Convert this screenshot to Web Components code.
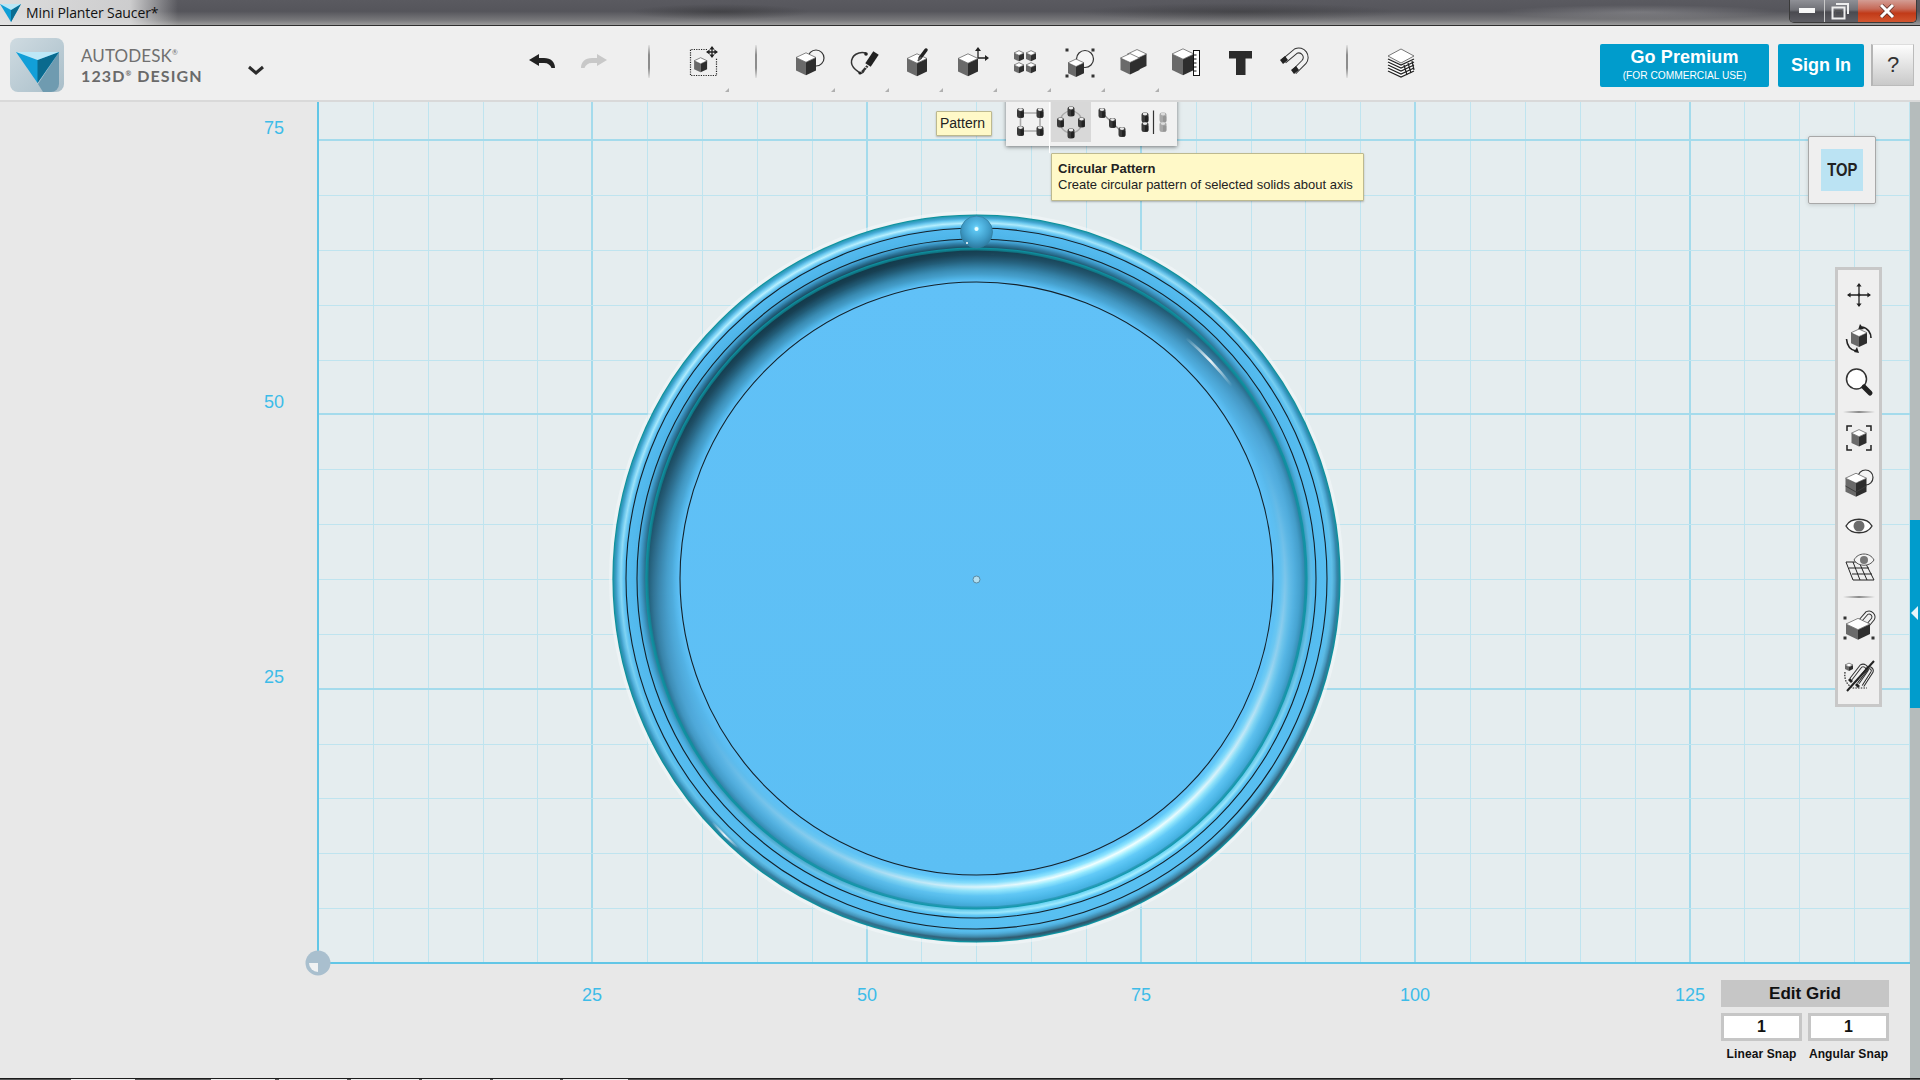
<!DOCTYPE html>
<html>
<head>
<meta charset="utf-8">
<title>Mini Planter Saucer*</title>
<style>
  html, body { margin: 0; padding: 0; height: 100%; overflow: hidden; background: #e8e8e8; }
  body { width: 1920px; height: 1080px; display: flex; flex-direction: column; font-family: "Liberation Sans", Arial, sans-serif; }
</style>
</head>
<body>
<win-titlebar>Mini Planter Saucer*</win-titlebar>

<app-toolbar>
  <tool-button icon="undo" w="52" slot="edit"></tool-button>
  <tool-button icon="redo" w="52" slot="edit"></tool-button>
  <tool-sep slot="edit" style="margin:19px 26px 0 28px"></tool-sep>
  <tool-button icon="primitives" corner slot="edit"></tool-button>
  <tool-sep slot="edit" style="margin:19px 25px 0"></tool-sep>
  <tool-button icon="sketch" corner slot="edit"></tool-button>
  <tool-button icon="pen" dx="2" corner slot="edit"></tool-button>
  <tool-button icon="brush" dx="2" corner slot="edit"></tool-button>
  <tool-button icon="move" dx="1" corner slot="edit"></tool-button>
  <tool-button icon="pattern" corner slot="edit"></tool-button>
  <tool-button icon="scale" corner slot="edit"></tool-button>
  <tool-button icon="combine" corner slot="edit"></tool-button>
  <tool-button icon="ruler" slot="edit"></tool-button>
  <tool-button icon="text" slot="edit"></tool-button>
  <tool-button icon="magnet" dx="-1" slot="edit"></tool-button>
  <tool-sep slot="edit" style="margin:19px 26px 0 24px"></tool-sep>
  <tool-button icon="layers" slot="edit"></tool-button>
</app-toolbar>

<work-space>
  <grid-plane></grid-plane>
  <planter-model></planter-model>

  <ruler-label x="274" y="128">75</ruler-label>
  <ruler-label x="274" y="402">50</ruler-label>
  <ruler-label x="274" y="677">25</ruler-label>
  <ruler-label x="592" y="995">25</ruler-label>
  <ruler-label x="867" y="995">50</ruler-label>
  <ruler-label x="1141" y="995">75</ruler-label>
  <ruler-label x="1415" y="995">100</ruler-label>
  <ruler-label x="1690" y="995">125</ruler-label>
  <origin-mark></origin-mark>

  <hint-tip style="left:936px;top:9px;width:56px;height:25px;padding:0 0 0 3px">Pattern</hint-tip>
  <pattern-flyout></pattern-flyout>
  <hint-tip style="left:1051px;top:51px;width:313px;height:48px;padding:7px 0 0 6px;line-height:16px;font-size:13px">
    <b>Circular Pattern</b><br>Create circular pattern of selected solids about axis
  </hint-tip>

  <view-cube>TOP</view-cube>
  <nav-panel>
    <nav-cell icon="n-move" style="margin-top:7px"></nav-cell>
    <nav-cell icon="n-orbit" style="margin-top:7px"></nav-cell>
    <nav-cell icon="n-zoom" style="margin-top:7px"></nav-cell>
    <nav-rule style="margin-top:12px"></nav-rule>
    <nav-cell icon="n-fit" style="margin-top:7px"></nav-cell>
    <nav-cell icon="n-view" style="margin-top:8px"></nav-cell>
    <nav-cell icon="n-eye" style="margin-top:8px"></nav-cell>
    <nav-cell icon="n-grid" style="margin-top:5px"></nav-cell>
    <nav-rule style="margin-top:11px"></nav-rule>
    <nav-cell icon="n-snap" style="margin-top:9px"></nav-cell>
    <nav-cell icon="n-mix" style="margin-top:15px"></nav-cell>
  </nav-panel>
  <side-rail></side-rail>
  <snap-panel></snap-panel>
</work-space>
<task-edge></task-edge>

<script>
// helpers for the little isometric toolbar pictures
function cube(cx, cy, hw, h) {
  const rh = hw * 0.47;
  h = h === undefined ? hw * 1.3 : h;
  const y0 = cy - (2 * rh + h) / 2;
  const p = (...a) => a.join(' ');
  return `<path d="M${p(cx - hw, y0 + rh)}L${p(cx, y0 + 2 * rh)}V${y0 + 2 * rh + h}L${p(cx - hw, y0 + rh + h)}Z" fill="#6a6a6a"/>` +
    `<path d="M${p(cx + hw, y0 + rh)}L${p(cx, y0 + 2 * rh)}V${y0 + 2 * rh + h}L${p(cx + hw, y0 + rh + h)}Z" fill="#2e2e2e"/>` +
    `<path d="M${p(cx, y0)}L${p(cx + hw, y0 + rh)}L${p(cx, y0 + 2 * rh)}L${p(cx - hw, y0 + rh)}Z" fill="#fff" stroke="#555" stroke-width=".7"/>`;
}
function ring(cx, cy, r) {
  return `<circle cx="${cx}" cy="${cy}" r="${r}" fill="#f4f4f4" stroke="#333" stroke-width="1.2"/>`;
}
function cyl(cx, cy, dim) {
  const c = dim ? '#a8a8a8' : '#3a3a3a';
  const t = dim ? '#dcdcdc' : '#e8e8e8';
  return `<rect x="${cx - 3.5}" y="${cy - 5}" width="7" height="10" rx="2.5" fill="${c}"/>` +
    `<ellipse cx="${cx}" cy="${cy - 3.4}" rx="2.3" ry="1.4" fill="${t}"/>` +
    `<rect x="${cx}" y="${cy - 1.6}" width="3.3" height="6" rx="1" fill="${dim ? '#969696' : '#222'}"/>`;
}
function dots(list) {
  return list.map(([x, y]) => `<rect x="${x - 1.5}" y="${y - 1.5}" width="3" height="3" fill="#333"/>`).join('');
}
function cross(cx, cy, r) {
  const h = 2.6;
  return `<path d="M${cx - r} ${cy}H${cx + r}M${cx} ${cy - r}V${cy + r}" stroke="#222" stroke-width="1.3" fill="none"/>` +
    `<path d="M${cx} ${cy - r - 1}l${h} ${h + 1}h${-2 * h}ZM${cx} ${cy + r + 1}l${h} ${-h - 1}h${-2 * h}ZM${cx - r - 1} ${cy}l${h + 1} ${h}v${-2 * h}ZM${cx + r + 1} ${cy}l${-h - 1} ${h}v${-2 * h}Z" fill="#222"/>`;
}
function magnet(d, sw) {
  return `<path d="${d}" fill="none" stroke="#333" stroke-width="${sw}"/><path d="${d}" fill="none" stroke="#f2f2f2" stroke-width="${sw - 2}"/>`;
}

const ICONS = {
  undo: `<svg width="36" height="36" viewBox="0 0 36 36"><path d="M5 16L15 10V14H20C27 14 31 18 31 24H27.5C26.5 21 24 19 20 19H15V22Z" fill="#222"/></svg>`,
  redo: `<svg width="36" height="36" viewBox="0 0 36 36"><path d="M31 16L21 10V14H16C9 14 5 18 5 24H8.5C9.5 21 12 19 16 19H21V22Z" fill="#c8c8c8"/></svg>`,
  primitives: `<svg width="36" height="36" viewBox="0 0 36 36"><path d="M22 5.5H5.5V31.5H31.5V14" fill="none" stroke="#222" stroke-width="1.2" stroke-dasharray="1.2 1.2"/>${cube(15.6, 21, 6.5)}${cross(27, 8, 5)}</svg>`,
  sketch: `<svg width="36" height="36" viewBox="0 0 36 36">${ring(25, 14, 8)}${cube(15, 20, 10)}</svg>`,
  pen: `<svg width="36" height="36" viewBox="0 0 36 36"><path d="M19 9C12 7 4 11 4.500 19C5 24 9 26 13 29C15 30 16 29 17 27" fill="none" stroke="#333" stroke-width="1.500"/><circle cx="19" cy="10" r="1.800" fill="#222"/><circle cx="13" cy="29" r="1.600" fill="#222"/><path d="M21 21L29 9" stroke="#222" stroke-width="6.500"/><path d="M20.500 22L15 28" stroke="#333" stroke-width="2.500"/><path d="M18 23l3 2" stroke="#eee" stroke-width="1"/></svg>`,
  brush: `<svg width="36" height="36" viewBox="0 0 36 36">${cube(16, 21, 10)}<path d="M19 14L25 6" stroke="#222" stroke-width="3.500" stroke-linecap="round"/><path d="M17 17L20 13" stroke="#555" stroke-width="2"/></svg>`,
  move: `<svg width="36" height="36" viewBox="0 0 36 36">${cube(14, 21, 10)}<path d="M24 14V5M24 14H33" stroke="#222" stroke-width="1.300"/><path d="M24 3l3 4h-6ZM35 14l-4 3v-6Z" fill="#222"/></svg>`,
  pattern: `<svg width="36" height="36" viewBox="0 0 36 36">${cube(12, 12, 5, 6)}${cube(24, 12, 5, 6)}${cube(12, 24, 5, 6)}${cube(24, 24, 5, 6)}</svg>`,
  scale: `<svg width="36" height="36" viewBox="0 0 36 36">${dots([[6, 6], [32, 6], [6, 32], [32, 32]])}${ring(24, 15, 8.500)}${cube(15, 24, 8)}</svg>`,
  combine: `<svg width="36" height="36" viewBox="0 0 36 36">${cube(22, 16, 9.500, 12)}${cube(15, 20, 9.500, 12)}</svg>`,
  ruler: `<svg width="36" height="36" viewBox="0 0 36 36">${cube(14, 18, 11, 16)}<rect x="24.500" y="6.500" width="6" height="25" fill="#fff" stroke="#111"/><path d="M24.500 11h3M24.500 15h3M24.500 19h3M24.500 23h3M24.500 27h3" stroke="#111"/></svg>`,
  text: `<svg width="36" height="36" viewBox="0 0 36 36"><rect x="6" y="7" width="23" height="7.500" fill="#2b2b2b"/><rect x="13" y="7" width="9.500" height="24" fill="#2b2b2b"/></svg>`,
  magnet: `<svg width="36" height="36" viewBox="0 0 36 36">${magnet('M8 17L20 7A7 7 0 0 1 28 18L18 28', 6)}<path d="M4 16l5-4 3 4-5 4ZM15 26l5-4 3 4-5 4Z" fill="#222"/></svg>`,
  layers: `<svg width="36" height="36" viewBox="0 0 36 36"><path d="M5 15V27L18 33L31 27V14L18 20Z" fill="#fff"/><path d="M5 15L18 21L31 15M5 18L18 24L31 18M5 21L18 27L31 21M5 24L18 30L31 24M5 27L18 33L31 27" fill="none" stroke="#222" stroke-width="1.300"/><path d="M21 21L24 31M25 19L28 29M29 17L31 26" stroke="#222" stroke-width="1.200"/><path d="M18 5L31 12L18 19L5 12Z" fill="#fff" stroke="#555" stroke-width=".8"/></svg>`,

  'n-move': `<svg width="36" height="36" viewBox="0 0 36 36">${cross(18, 18, 11)}<circle cx="18" cy="18" r="1.400" fill="#222"/></svg>`,
  'n-orbit': `<svg width="36" height="36" viewBox="0 0 36 36"><path d="M21 7C27 8 30 13 30 18" fill="none" stroke="#222" stroke-width="1.600"/><path d="M15 31C9 30 6 25 5.500 19" fill="none" stroke="#222" stroke-width="1.600"/><path d="M19 4l4 5-6 1ZM18 33l-5-1 3-5Z" fill="#222"/>${cube(18, 18, 8)}</svg>`,
  'n-zoom': `<svg width="36" height="36" viewBox="0 0 36 36"><circle cx="15.500" cy="16" r="10" fill="#fff" stroke="#333" stroke-width="1.500"/><path d="M23 24L29 30" stroke="#222" stroke-width="5" stroke-linecap="round"/></svg>`,
  'n-fit': `<svg width="36" height="36" viewBox="0 0 36 36"><path d="M6 11V6H11M25 6H30V11M6 25V30H11M25 30H30V25" fill="none" stroke="#222" stroke-width="1.500"/>${cube(18, 18, 7.500)}</svg>`,
  'n-view': `<svg width="36" height="36" viewBox="0 0 36 36">${ring(24.500, 13.500, 7.500)}${cube(15, 21, 10.500)}<path d="M4.500 22L15 28L25.500 22" fill="none" stroke="#3f3f3f" stroke-width="1"/></svg>`,
  'n-eye': `<svg width="36" height="36" viewBox="0 0 36 36"><path d="M5 18C10 9 26 9 31 18C26 27 10 27 5 18Z" fill="#fff" stroke="#333" stroke-width="1.400"/><circle cx="18" cy="18" r="5.500" fill="#6c6c6c"/></svg>`,
  'n-grid': `<svg width="36" height="36" viewBox="0 0 36 36"><path d="M5 13H24M8 19H28M11 25H31M12 31H33M5 13L12 31M12 13L19 31M18 13L26 31M24 13L33 31" stroke="#222" stroke-width="1" fill="none"/><path d="M13 11C17 3 29 3 33 11C29 18 17 18 13 11Z" fill="#f4f4f4" stroke="#555"/><circle cx="23" cy="11" r="4" fill="#777"/></svg>`,
  'n-snap': `<svg width="36" height="36" viewBox="0 0 36 36">${dots([[4, 11], [32, 31], [4, 31]])}${magnet('M19 14L26 6A4.500 4.500 0 0 1 32 12L27 18', 4)}${cube(17, 22, 12, 10)}</svg>`,
  'n-mix': `<svg width="36" height="36" viewBox="0 0 36 36">${cube(8, 9, 4, 4)}<path d="M4 14C3 22 6 27 12 30H26" fill="none" stroke="#222" stroke-width="1.200" stroke-dasharray="1.500 1.200"/>${magnet('M10 21L20 8A4 4 0 0 1 26 12L17 25', 3.500)}${magnet('M16 24L27 10A3 3 0 0 1 31 14L22 28', 3)}<path d="M6 33L33 3" stroke="#222" stroke-width="2"/><path d="M9 20l3 3-2 2-3-3ZM16 25l3 3-2 2-3-3Z" fill="#222"/></svg>`,

  'p-rect': `<svg width="40" height="40" viewBox="0 0 40 40"><path d="M10.500 11V29H30V11H10.500" fill="none" stroke="#aaa" stroke-width="1.600"/>${cyl(10.500, 11)}${cyl(30, 11)}${cyl(10.500, 29)}${cyl(30, 29)}</svg>`,
  'p-circ': `<svg width="40" height="40" viewBox="0 0 40 40"><circle cx="20" cy="20" r="11" fill="none" stroke="#aaa" stroke-width="1.200"/>${cyl(20, 9.500)}${cyl(9.500, 20.500)}${cyl(30.500, 20.500)}${cyl(20, 31.500)}</svg>`,
  'p-path': `<svg width="40" height="40" viewBox="0 0 40 40"><path d="M10 11L20.500 21L30 30" stroke="#999" stroke-width="1.500"/>${cyl(10, 11)}${cyl(20.500, 21)}${cyl(30, 30)}</svg>`,
  'p-mirr': `<svg width="40" height="40" viewBox="0 0 40 40"><path d="M20.500 8.500V32" stroke="#333" stroke-width="1.200"/>${cyl(12, 15.500)}${cyl(12, 25)}${cyl(30, 15.500, true)}${cyl(30, 25, true)}</svg>`
};

class BaseElement extends HTMLElement {
  render(html) {
    const shadow = this.shadowRoot || this.attachShadow({ mode: 'open' });
    const template = document.createElement('template');
    template.innerHTML = html;
    shadow.appendChild(template.content.cloneNode(true));
  }
}

class WinTitlebar extends BaseElement {
  connectedCallback() {
    this.render(`
    <style>
      :host { display: flex; flex: 0 0 25px; height: 25px; border-bottom: 1px solid #2e2e2e; box-sizing: content-box;
        background:
          linear-gradient(90deg, rgba(232,232,232,.92) 0, rgba(225,225,225,.85) 130px, rgba(225,225,225,0) 178px),
          radial-gradient(ellipse 90px 8px at 720px 12px, rgba(30,30,30,.35), rgba(30,30,30,0)),
          radial-gradient(ellipse 160px 9px at 1240px 12px, rgba(30,30,30,.3), rgba(30,30,30,0)),
          radial-gradient(ellipse 140px 7px at 1640px 12px, rgba(255,255,255,.2), rgba(255,255,255,0)),
          linear-gradient(180deg, #5a5a60 0, #55555b 45%, #77777a 80%, #9c9c9c 100%); }
      .logo { margin: 3px 0 0 0; width: 22px; height: 20px; }
      .name { font: 14px/26px "Open Sans", "Liberation Sans", sans-serif; color: #111; margin-left: 4px; letter-spacing: -.1px; }
      .btns { margin-left: auto; margin-right: 3px; display: flex; height: 22px; border: 1px solid #3a3a3a; border-top: 0; border-radius: 0 0 5px 5px; overflow: hidden; }
      .b { display: flex; align-items: center; justify-content: center; box-sizing: border-box;
        background: linear-gradient(180deg, #8f9096 0, #6f7076 45%, #4a4a50 55%, #5e5e64 100%); border-right: 1px solid #c9c9c9; }
      .min { width: 35px; } .max { width: 33px; border-right: 0; padding-right: 3px; }
      .close { width: 58px; border: 0; background: linear-gradient(180deg, #d39d94 0, #c66a58 40%, #c13a18 60%, #d2552f 100%); }
    </style>
    <svg class="logo" viewBox="0 0 22 20"><path d="M0 1H21L11 19Z" fill="#0e9ed6"/><path d="M11 7L21 1L11 19Z" fill="#0b6c90"/><path d="M0 1H21L11 7Z" fill="#b9e6f6"/></svg>
    <span class="name"><slot></slot></span>
    <div class="btns">
      <div class="b min"><svg width="16" height="6"><rect width="16" height="5" fill="#fff" opacity=".95"/></svg></div>
      <div class="b max"><svg width="18" height="17" viewBox="0 0 18 17"><path d="M5 1H17V11" fill="none" stroke="#eee" stroke-width="2"/><rect x="1.500" y="4.500" width="12" height="11" fill="none" stroke="#eee" stroke-width="2"/><rect x="4.500" y="7.500" width="6" height="5" fill="none" stroke="#555" stroke-width="1"/></svg></div>
      <div class="b close"><svg width="16" height="14" viewBox="0 0 16 14"><path d="M2 1L14 13M14 1L2 13" stroke="#5c3028" stroke-width="4.500"/><path d="M2 1L14 13M14 1L2 13" stroke="#fff" stroke-width="3"/></svg></div>
    </div>`);
  }
}

class AppToolbar extends BaseElement {
  connectedCallback() {
    this.render(`
    <style>
      :host { display: flex; flex: 0 0 76px; height: 76px; box-sizing: border-box; background: #efefef; border-bottom: 2px solid #d9d9d9; }
      .brand { display: flex; width: 516px; flex: none; align-items: flex-start; }
      .logo { width: 54px; height: 54px; margin: 12px 0 0 10px; }
      .words { margin: 21px 0 0 17px; color: #6c6c6c; font-family: Lato, "Liberation Sans", sans-serif; width: 164px; }
      .w1 { font-size: 17px; line-height: 18px; letter-spacing: .1px; color: #707070; }
      .w2 { font-size: 16px; line-height: 21px; font-weight: 700; letter-spacing: 1.1px; color: #6a6a6a; }
      sup { font-size: 7px; line-height: 0; }
      .chev { margin: 39px 0 0 2px; }
      .edit { display: flex; align-items: flex-start; }
      .cta { margin-left: auto; display: flex; align-items: flex-start; padding: 18px 6px 0 0; gap: 9px; }
      .btn { background: #009ccc; color: #fff; border-radius: 2px; height: 43px; display: flex; flex-direction: column; align-items: center; justify-content: center; font-weight: bold; font-size: 18px; }
      .prem { width: 169px; } .sign { width: 86px; }
      .prem span { font-weight: normal; font-size: 10.2px; line-height: 13px; margin-top: 2px; }
      .prem b { line-height: 19px; letter-spacing: .1px; margin-top: -1px; }
      .help { width: 43px; height: 42px; margin-left: -2px; box-sizing: border-box; border: 1px solid #bbb; border-left: 2px solid #b5b5b5; border-top-color: #ddd; background: linear-gradient(180deg, #fdfdfd, #c9c9c9); color: #333; font-size: 22px; line-height: 40px; text-align: center; }
    </style>
    <div class="brand">
      <svg class="logo" viewBox="0 0 54 54">
        <defs><linearGradient id="lg" x1="0" y1="0" x2="1" y2="1"><stop offset="0" stop-color="#cfdbe1"/><stop offset="1" stop-color="#a9bec9"/></linearGradient></defs>
        <rect width="54" height="54" rx="8" fill="url(#lg)"/>
        <path d="M49 14V46A8 8 0 0 1 41 54H33L28 46Z" fill="#6f9bb0"/>
        <path d="M6 14H49L27.500 45Z" fill="#129fd8"/>
        <path d="M27.500 22L49 14L27.500 45Z" fill="#0a6a8e"/>
        <path d="M6 14H49L27.500 22Z" fill="#bde8f7"/>
      </svg>
      <div class="words"><div class="w1">AUTODESK<sup>®</sup></div><div class="w2">123D<sup>®</sup> DESIGN</div></div>
      <svg class="chev" width="18" height="12" viewBox="0 0 18 12"><path d="M2 2L9 8L16 2" fill="none" stroke="#2b2b2b" stroke-width="3"/></svg>
    </div>
    <div class="edit"><slot name="edit"></slot></div>
    <div class="cta">
      <div class="btn prem"><b>Go Premium</b><span>(FOR COMMERCIAL USE)</span></div>
      <div class="btn sign">Sign In</div>
      <div class="help">?</div>
    </div>`);
  }
}

class ToolButton extends BaseElement {
  connectedCallback() {
    const w = this.getAttribute('w') || 54;
    const dx = this.getAttribute('dx') || 0;
    this.render(`
    <style>
      :host { display: flex; position: relative; width: ${w}px; height: 74px; box-sizing: border-box; padding-bottom: 2px; align-items: center; justify-content: center; flex: none; }
      svg { transform: translateX(${dx}px); }
      .corner { position: absolute; left: 49px; top: 62px; width: 0; height: 0; border-style: solid; border-width: 0 0 4px 4px; border-color: transparent transparent #b0b0b0 transparent; }
    </style>
    ${ICONS[this.getAttribute('icon')]}
    ${this.hasAttribute('corner') ? '<i class="corner"></i>' : ''}`);
  }
}

class ToolSep extends BaseElement {
  connectedCallback() {
    this.render(`<style>:host { display: block; flex: none; width: 2px; height: 33px; margin-top: 19px; background: linear-gradient(180deg, rgba(120,120,120,.1), #8c8c8c 30%, #8c8c8c 70%, rgba(120,120,120,.1)); }</style>`);
  }
}

class WorkSpace extends BaseElement {
  connectedCallback() {
    this.render(`<style>:host { display: block; position: relative; flex: 1 1 auto; background: #e8e8e8; overflow: hidden; }</style><slot></slot>`);
  }
}

class GridPlane extends BaseElement {
  connectedCallback() {
    const ox = 318, oy = 963, step = 54.86, right = 1910, top = 102;
    let lines = '';
    for (let i = 1; ox + i * step < right; i++) {
      const x = Math.round(ox + i * step), major = i % 5 === 0;
      lines += major
        ? `<rect x="${x - 1}" y="${top}" width="2" height="${oy - top}" fill="#a4dbec"/>`
        : `<rect x="${x}" y="${top}" width="1" height="${oy - top}" fill="#bfe4ef"/>`;
    }
    for (let i = 1; oy - i * step > top; i++) {
      const y = Math.round(oy - i * step), major = i % 5 === 0;
      lines += major
        ? `<rect x="${ox}" y="${y - 1}" width="${right - ox}" height="2" fill="#a4dbec"/>`
        : `<rect x="${ox}" y="${y}" width="${right - ox}" height="1" fill="#bfe4ef"/>`;
    }
    this.render(`
    <style>:host { position: absolute; left: 0; top: 0; display: block; width: 1920px; height: 976px; } svg { display: block; }</style>
    <svg width="1920" height="976" viewBox="0 102 1920 976">
      <rect x="${ox}" y="${top}" width="${right - ox}" height="${oy - top}" fill="#e5edef"/>
      ${lines}
      <rect x="${ox - 1}" y="${top}" width="2" height="${oy - top + 1}" fill="#62c6e6"/>
      <rect x="${ox - 1}" y="${oy - 1}" width="${right - ox + 1}" height="2" fill="#62c6e6"/>
    </svg>`);
  }
}

// shaded saucer: one thin ring per pixel of radius, coloured by a radial profile
// [radius, colour facing away from the light, side-on colour, colour facing the light]
const PROFILE = [
  [297, '#5fc0f6', '#5fc0f6', '#5fc0f6'],
  [300, '#4fb2e4', '#5bbdf2', '#62caf9'],
  [304, '#439cc8', '#56b6ea', '#8ee4ff'],
  [308, '#3a8cb4', '#54b2e4', '#f0ffff'],
  [312, '#2e7799', '#52ade0', '#9aecff'],
  [317, '#215a75', '#4ea8d8', '#62caf8'],
  [323, '#173f52', '#4298c4', '#4fbcec'],
  [327, '#13394a', '#327fa4', '#45b0e0'],
  [328, '#0f6f7d', '#148a9c', '#2e9cbc'],
  [330, '#0c8f9e', '#0e93a4', '#109aac'],
  [331, '#1b5068', '#3a93b8', '#70d6f6'],
  [334, '#2b7398', '#48aadc', '#a4eeff'],
  [337, '#3f9ccb', '#50b6ea', '#5ac6f6'],
  [340, '#4db4e8', '#53baee', '#58c0f2'],
  [351, '#55bbf0', '#56bdf0', '#58bff0'],
  [353, '#7fd4f6', '#5cc0ee', '#55b8e8'],
  [355, '#b8f0ff', '#66c6ee', '#4ba6d2'],
  [358, '#6ccaf0', '#4cacd8', '#3c7f9e'],
  [360, '#46a8d4', '#3a94bc', '#2f5468'],
  [362, '#2a9db8', '#1f8fa8', '#256f84'],
  [363, '#0d919c', '#0c8f9a', '#0a97a4']
];
function hex2(c) { return [1, 3, 5].map(i => parseInt(c.substr(i, 2), 16)); }
function mix(a, b, t) {
  const A = hex2(a), B = hex2(b);
  return '#' + A.map((v, i) => Math.round(v + (B[i] - v) * t).toString(16).padStart(2, '0')).join('');
}
function bandAt(r) {
  for (let i = 0; i < PROFILE.length - 1; i++) {
    const p = PROFILE[i], q = PROFILE[i + 1];
    if (r >= p[0] && r <= q[0]) {
      const t = (r - p[0]) / (q[0] - p[0] || 1);
      return [mix(p[1], q[1], t), mix(p[2], q[2], t), mix(p[3], q[3], t)];
    }
  }
  return PROFILE[PROFILE.length - 1].slice(1);
}

class PlanterModel extends BaseElement {
  connectedCallback() {
    const cx = 976.5, cy = 578.5, ux = 0.42, uy = 0.907;
    let defs = '', rings = '';
    for (let r = 363; r >= 297; r--) {
      const [d, m, l] = bandAt(r);
      const id = 'b' + r;
      defs += `<linearGradient id="${id}" gradientUnits="userSpaceOnUse" x1="${cx - ux * r}" y1="${cy - uy * r}" x2="${cx + ux * r}" y2="${cy + uy * r}">` +
        `<stop offset="0" stop-color="${d}"/><stop offset=".22" stop-color="${mix(d, m, .4)}"/><stop offset=".52" stop-color="${m}"/>` +
        `<stop offset=".82" stop-color="${mix(m, l, .4)}"/><stop offset="1" stop-color="${l}"/></linearGradient>`;
      rings += `<circle cx="${cx}" cy="${cy}" r="${r}" fill="none" stroke="url(#${id})" stroke-width="2.2"/>`;
    }
    this.render(`
    <style>:host { position: absolute; left: 0; top: 0; display: block; width: 1920px; height: 976px; } svg { display: block; }</style>
    <svg width="1920" height="976" viewBox="0 102 1920 976">
      <defs>
        ${defs}
        <linearGradient id="floor" x1="0" y1="0" x2="0" y2="1"><stop offset="0" stop-color="#61c1f7"/><stop offset="1" stop-color="#5cbff4"/></linearGradient>
        <radialGradient id="ball" cx=".5" cy=".38" r=".62">
          <stop offset="0" stop-color="#9fe8fb"/><stop offset=".16" stop-color="#5cc4f0"/><stop offset=".65" stop-color="#3f9cc8"/><stop offset="1" stop-color="#2c7aa0"/>
        </radialGradient>
        <linearGradient id="streak" x1="0" y1="0" x2="1" y2="1"><stop offset="0" stop-color="#fff" stop-opacity="0"/><stop offset=".5" stop-color="#fff" stop-opacity=".9"/><stop offset="1" stop-color="#fff" stop-opacity="0"/></linearGradient>
      </defs>
      <circle cx="${cx}" cy="${cy}" r="366" fill="none" stroke="#f4f8f9" stroke-opacity=".55" stroke-width="3"/>
      <circle cx="${cx}" cy="${cy}" r="297" fill="url(#floor)"/>
      ${rings}
      <path d="M1186 338A322 322 0 0 1 1232 386" fill="none" stroke="url(#streak)" stroke-width="2.500"/>
      <path d="M712 822A358 358 0 0 0 738 848" fill="none" stroke="url(#streak)" stroke-width="2"/>
      <g fill="none" stroke="#14222b" stroke-width="1.100">
        <circle cx="${cx}" cy="${cy}" r="296.500"/>
        <circle cx="${cx}" cy="${cy}" r="339.500"/>
        <circle cx="${cx}" cy="${cy}" r="350.500"/>
      </g>
      <circle cx="${cx}" cy="232" r="16" fill="url(#ball)" stroke="#347f9f" stroke-width=".8"/>
      <circle cx="${cx}" cy="229" r="2" fill="#eaffff"/>
      <circle cx="967" cy="243" r="1" fill="#fff"/>
      <circle cx="${cx}" cy="${cy + 1}" r="3.500" fill="#b4dff0" stroke="#5b8aa3" stroke-width="1"/>
    </svg>`);
  }
}

class RulerLabel extends BaseElement {
  connectedCallback() {
    const x = this.getAttribute('x'), y = this.getAttribute('y') - 102;
    this.render(`<style>:host { position: absolute; left: ${x}px; top: ${y}px; transform: translate(-50%, -50%); font-size: 18px; color: #3dbce8; line-height: 20px; }</style><slot></slot>`);
  }
}

class OriginMark extends BaseElement {
  connectedCallback() {
    this.render(`
    <style>:host { position: absolute; left: 305px; top: 848px; width: 26px; height: 26px; display: block; } svg { display: block; }</style>
    <svg width="26" height="26" viewBox="0 0 26 26"><circle cx="13" cy="13" r="12.500" fill="#a9bfce"/><path d="M13 13H4A9 9 0 0 0 13 22Z" fill="#f0f2f3"/></svg>`);
  }
}

class HintTip extends BaseElement {
  connectedCallback() {
    this.render(`<style>:host { position: absolute; display: block; box-sizing: border-box; background: #fff9c8; border: 1px solid #bdb98f; border-radius: 1px; box-shadow: 0 1px 2px rgba(0,0,0,.25); font-size: 14px; line-height: 23px; padding: 0 4px; color: #222; white-space: nowrap; z-index: 3; }</style><slot></slot>`);
  }
}

class PatternFlyout extends BaseElement {
  connectedCallback() {
    this.render(`
    <style>
      :host { position: absolute; left: 1006px; top: -4px; width: 171px; height: 48px; box-sizing: border-box; display: flex; gap: 1px; padding: 4px; background: #f1f1f1; box-shadow: 0 1px 4px rgba(0,0,0,.5); z-index: 2; }
      .c { width: 40px; height: 40px; flex: none; } .c.on { background: #d8d8d8; }
      .notch { position: absolute; left: 18px; top: -6px; width: 0; height: 0; border-left: 7px solid transparent; border-right: 7px solid transparent; border-bottom: 6px solid #f1f1f1; }
      .edge { position: absolute; left: 43px; top: -10px; width: 1px; height: 65px; background: #fff; }
    </style>
    <i class="notch"></i>
    <div class="c">${ICONS['p-rect']}</div><div class="c on">${ICONS['p-circ']}</div><div class="c">${ICONS['p-path']}</div><div class="c">${ICONS['p-mirr']}</div>
    <i class="edge"></i>`);
  }
}

class ViewCube extends BaseElement {
  connectedCallback() {
    this.render(`
    <style>
      :host { position: absolute; left: 1808px; top: 34px; width: 68px; height: 68px; box-sizing: border-box; display: flex; align-items: center; justify-content: center; background: #efefef; border: 1px solid #a8a8a8; border-radius: 2px; box-shadow: 0 1px 4px rgba(0,0,0,.15); }
      .f { width: 42px; height: 42px; background: #bbe3f3; display: flex; align-items: center; justify-content: center; color: #222; font: bold 18px "Liberation Sans", sans-serif; }
      span { display: block; transform: scaleX(.82); }
    </style>
    <div class="f"><span><slot></slot></span></div>`);
  }
}

class NavPanel extends BaseElement {
  connectedCallback() {
    this.render(`<style>:host { position: absolute; left: 1835px; top: 165px; width: 47px; height: 440px; box-sizing: border-box; display: flex; flex-direction: column; align-items: center; background: #efefef; border: 3px solid #c8c8c8; }</style><slot></slot>`);
  }
}

class NavCell extends BaseElement {
  connectedCallback() {
    this.render(`<style>:host { display: block; width: 36px; height: 36px; flex: none; } svg { display: block; }</style>${ICONS[this.getAttribute('icon')]}`);
  }
}

class NavRule extends BaseElement {
  connectedCallback() {
    this.render(`<style>:host { display: block; width: 32px; height: 2px; flex: none; background: linear-gradient(90deg, rgba(120,120,120,0), #8a8a8a 50%, rgba(120,120,120,0)); }</style>`);
  }
}

class SideRail extends BaseElement {
  connectedCallback() {
    this.render(`
    <style>
      :host { position: absolute; right: 0; top: 0; width: 10px; height: 976px; background: #b5bcbc; display: block; }
      .on { position: absolute; left: 0; top: 418px; width: 10px; height: 188px; background: #009ccc; }
      .tri { position: absolute; left: 1px; top: 86px; width: 0; height: 0; border-top: 7px solid transparent; border-bottom: 7px solid transparent; border-right: 7px solid #e6f5fa; }
    </style>
    <div class="on"><i class="tri"></i></div>`);
  }
}

class SnapPanel extends BaseElement {
  connectedCallback() {
    this.render(`
    <style>
      :host { position: absolute; left: 1721px; top: 878px; width: 168px; display: grid; grid-template-columns: 81px 81px; column-gap: 6px; color: #111; }
      .head { grid-column: 1 / 3; height: 27px; background: #c6c6c6; font: bold 17px/27px "Liberation Sans", sans-serif; text-align: center; margin-bottom: 6px; }
      .box { height: 28px; box-sizing: border-box; border: 3px solid #c6c6c6; background: #fff; font: bold 16px/22px "Liberation Sans", sans-serif; text-align: center; }
      .lab { font: bold 12px/14px "Liberation Sans", sans-serif; text-align: center; margin-top: 6px; white-space: nowrap; letter-spacing: .1px; }
    </style>
    <div class="head">Edit Grid</div>
    <div class="box">1</div><div class="box">1</div>
    <div class="lab">Linear Snap</div><div class="lab">Angular Snap</div>`);
  }
}

class TaskEdge extends BaseElement {
  connectedCallback() {
    this.render(`<style>:host { display: block; flex: 0 0 2px; height: 2px; background:
      linear-gradient(#1c1c1c 50%, transparent 50%),
      linear-gradient(90deg, #555 71px, #eee 71px 135px, #555 135px 211px, #eee 211px 275px, #555 275px 279px, #eee 279px 347px, #555 347px 351px, #eee 351px 419px, #555 419px 422px, #eee 422px 490px, #555 490px 493px, #eee 493px 560px, #555 560px 563px, #eee 563px 628px, #555 628px); }</style>`);
  }
}

customElements.define('win-titlebar', WinTitlebar);
customElements.define('app-toolbar', AppToolbar);
customElements.define('tool-button', ToolButton);
customElements.define('tool-sep', ToolSep);
customElements.define('work-space', WorkSpace);
customElements.define('grid-plane', GridPlane);
customElements.define('planter-model', PlanterModel);
customElements.define('ruler-label', RulerLabel);
customElements.define('origin-mark', OriginMark);
customElements.define('hint-tip', HintTip);
customElements.define('pattern-flyout', PatternFlyout);
customElements.define('view-cube', ViewCube);
customElements.define('nav-panel', NavPanel);
customElements.define('nav-cell', NavCell);
customElements.define('nav-rule', NavRule);
customElements.define('side-rail', SideRail);
customElements.define('snap-panel', SnapPanel);
customElements.define('task-edge', TaskEdge);
</script>
</body>
</html>
